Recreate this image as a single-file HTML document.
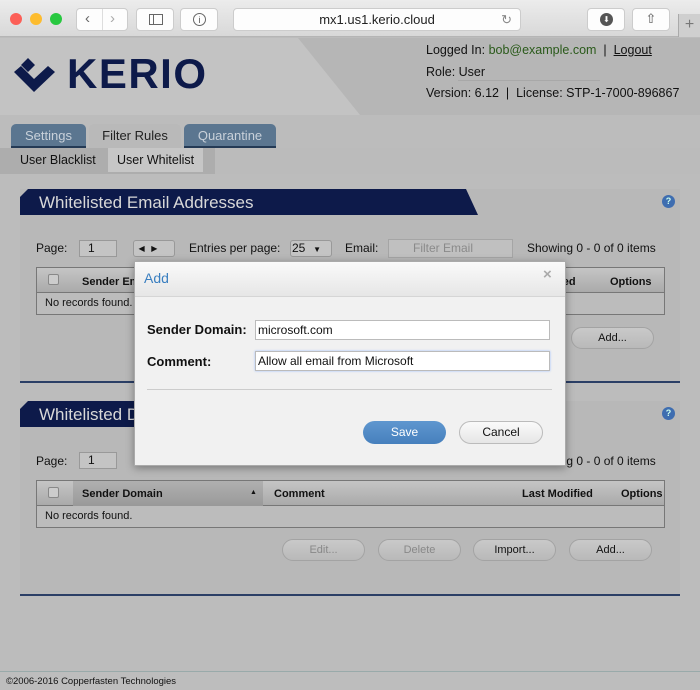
<!DOCTYPE html>
<html><head><style>
*{box-sizing:border-box;margin:0;padding:0}
body{width:700px;height:690px;overflow:hidden;font-family:"Liberation Sans",sans-serif;background:#bcbcbc;position:relative;font-size:12px;color:#111}
.a{position:absolute}
.btn{position:absolute;border:1px solid #a3a3a3;border-radius:11px;background:linear-gradient(#c9c9c9,#b9b9b9);text-align:center;font-size:11px;line-height:20px;height:22px}
.tb{position:absolute;top:8px;height:23px;border:1px solid #ccc;border-radius:4px;background:#fdfdfd}
</style></head><body>
<div class="a" style="left:0;top:0;width:700px;height:37px;background:linear-gradient(#ececec,#d8d8d8);border-bottom:1px solid #b5b5b5"></div>
<div class="a" style="left:10px;top:13px;width:12px;height:12px;border-radius:6px;background:#fc5f57"></div>
<div class="a" style="left:30px;top:13px;width:12px;height:12px;border-radius:6px;background:#fdbc2e"></div>
<div class="a" style="left:50px;top:13px;width:12px;height:12px;border-radius:6px;background:#28c840"></div>
<div class="tb" style="left:76px;width:52px"></div>
<div class="a" style="left:102px;top:9px;width:1px;height:21px;background:#ddd"></div>
<div class="a" style="left:85px;top:10px;font-size:15px;color:#666">‹</div><div class="a" style="left:110px;top:10px;font-size:15px;color:#aaa">›</div>
<div class="tb" style="left:136px;width:38px"><div class="a" style="left:12px;top:5px;width:14px;height:11px;border:1px solid #666"></div><div class="a" style="left:16px;top:5px;width:1px;height:11px;background:#666"></div></div>
<div class="tb" style="left:180px;width:38px"><div class="a" style="left:12px;top:4px;width:13px;height:13px;border:1px solid #666;border-radius:7px;font-size:9px;text-align:center;line-height:12px;color:#555">i</div></div>
<div class="tb" style="left:233px;width:288px;text-align:center;font-size:13px;line-height:21px;color:#222">mx1.us1.kerio.cloud<span class="a" style="right:8px;top:0;color:#888">↻</span></div>
<div class="tb" style="left:587px;width:38px"><div class="a" style="left:12px;top:4px;width:13px;height:13px;border-radius:7px;background:#555;color:#fff;font-size:8px;text-align:center;line-height:13px">⬇</div></div>
<div class="tb" style="left:632px;width:38px;text-align:center;color:#555;font-size:13px;line-height:20px">⇧</div>
<div class="a" style="left:678px;top:14px;width:22px;height:23px;background:#cfcfcf;border-left:1px solid #aaa;text-align:center;color:#777;font-size:16px;line-height:22px">+</div>
<div class="a" style="left:0;top:38px;width:700px;height:77px;background:#b6b6b6"></div>
<div class="a" style="left:0;top:38px;width:360px;height:77px;background:#c3c3c3;clip-path:polygon(0 0,298px 0,360px 77px,0 77px)"></div>
<svg class="a" style="left:12px;top:58px" width="46" height="34" viewBox="0 0 46 34"><path d="M16 0 L23 7 L16 14 L9 7Z M2 14 L9 8 L22 21 L36 8 L43 14 L22 34Z" fill="#0d1a4a"/></svg>
<div class="a" style="left:67px;top:50px;font-size:42px;font-weight:bold;color:#0d1a4a;letter-spacing:1.5px">KERIO</div>
<div class="a" style="left:426px;top:43px;font-size:12.5px">Logged In: <span style="color:#2a5a1a">bob@example.com</span> &nbsp;| &nbsp;<u>Logout</u></div>
<div class="a" style="left:426px;top:65px;font-size:12.5px">Role: User</div>
<div class="a" style="left:458px;top:80px;width:142px;height:1px;background:#a8a8a8"></div>
<div class="a" style="left:426px;top:86px;font-size:12.5px">Version: 6.12 &nbsp;| &nbsp;License: STP-1-7000-896867</div>
<div class="a" style="left:11px;top:124px;width:75px;height:24px;background:#5b7690;border-radius:5px 5px 0 0;border-bottom:2px solid #243a55;color:#c9d1da;font-size:13px;text-align:center;line-height:24px">Settings</div>
<div class="a" style="left:89px;top:124px;width:92px;height:24px;background:#b9b9b9;border-radius:5px 5px 0 0;font-size:13px;text-align:center;line-height:24px;color:#222">Filter Rules</div>
<div class="a" style="left:184px;top:124px;width:92px;height:24px;background:#5b7690;border-radius:5px 5px 0 0;border-bottom:2px solid #243a55;color:#c9d1da;font-size:13px;text-align:center;line-height:24px">Quarantine</div>
<div class="a" style="left:0;top:148px;width:700px;height:26px;background:#bbb"></div>
<div class="a" style="left:0;top:148px;width:215px;height:26px;background:#adadad"></div>
<div class="a" style="left:20px;top:153px;font-size:12.5px">User Blacklist</div>
<div class="a" style="left:108px;top:148px;width:95px;height:24px;background:#c6c6c6"></div>
<div class="a" style="left:117px;top:153px;font-size:12.5px">User Whitelist</div>
<div class="a" style="left:20px;top:189px;width:660px;height:194px;background:#b8b8b8;border-bottom:2px solid #2b3f66"></div>
<div class="a" style="left:20px;top:189px;width:458px;height:26px;background:#0d1a4a;clip-path:polygon(8px 0,446px 0,458px 26px,0 26px,0 8px);color:#d8d8d8;font-size:17px;line-height:28px;padding-left:19px">Whitelisted Email Addresses</div>
<div class="a" style="left:662px;top:195px;width:13px;height:13px;border-radius:7px;background:#3e6db0;color:#cfe;font-size:9px;text-align:center;line-height:13px;font-weight:bold">?</div>
<div class="a" style="left:36px;top:241px">Page:</div>
<div class="a" style="left:79px;top:240px;width:38px;height:17px;border:1px solid #999;background:#c4c4c4;padding-left:8px;line-height:15px">1</div>
<div class="a" style="left:133px;top:240px;width:42px;height:17px;border:1px solid #999;border-radius:3px;background:#c4c4c4;font-size:8px;line-height:15px">&nbsp;&nbsp;◀&nbsp;&nbsp;&nbsp;▶</div>
<div class="a" style="left:189px;top:241px">Entries per page:</div>
<div class="a" style="left:290px;top:240px;width:42px;height:17px;border:1px solid #999;border-radius:3px;background:#c4c4c4;padding-left:1px;line-height:15px">25 <span style="font-size:8px">&nbsp;&nbsp;▼</span></div>
<div class="a" style="left:345px;top:241px">Email:</div>
<div class="a" style="left:388px;top:239px;width:125px;height:19px;border:1px solid #a5a5a5;background:#c0c0c0;color:#8a8a8a;padding-left:24px;line-height:17px">Filter Email</div>
<div class="a" style="left:527px;top:241px">Showing 0 - 0 of 0 items</div>
<div class="a" style="left:36px;top:267px;width:629px;height:48px;border:1px solid #777;background:#bcbcbc"></div>
<div class="a" style="left:37px;top:268px;width:627px;height:25px;background:linear-gradient(#c5c5c5,#aaa);border-bottom:1px solid #777"></div>
<div class="a" style="left:48px;top:274px;width:11px;height:11px;border:1px solid #888;border-radius:2px;background:#ccc"></div>
<div class="a" style="left:82px;top:276px;font-size:11px;font-weight:bold">Sender Em</div>
<div class="a" style="left:553px;top:276px;font-size:11px;font-weight:bold">ified</div>
<div class="a" style="left:610px;top:276px;font-size:11px;font-weight:bold">Options</div>
<div class="a" style="left:45px;top:297px;font-size:11px">No records found.</div>
<div class="btn" style="left:571px;top:327px;width:83px">Add...</div>
<div class="a" style="left:20px;top:401px;width:660px;height:195px;background:#b8b8b8;border-bottom:2px solid #2b3f66"></div>
<div class="a" style="left:20px;top:401px;width:458px;height:26px;background:#0d1a4a;clip-path:polygon(8px 0,446px 0,458px 26px,0 26px,0 8px);color:#d8d8d8;font-size:17px;line-height:28px;padding-left:19px">Whitelisted Domains</div>
<div class="a" style="left:662px;top:407px;width:13px;height:13px;border-radius:7px;background:#3e6db0;color:#cfe;font-size:9px;text-align:center;line-height:13px;font-weight:bold">?</div>
<div class="a" style="left:36px;top:454px">Page:</div>
<div class="a" style="left:79px;top:452px;width:38px;height:17px;border:1px solid #999;background:#c4c4c4;padding-left:8px;line-height:15px">1</div>
<div class="a" style="left:527px;top:454px">Showing 0 - 0 of 0 items</div>
<div class="a" style="left:36px;top:480px;width:629px;height:48px;border:1px solid #777;background:#bcbcbc"></div>
<div class="a" style="left:37px;top:481px;width:627px;height:25px;background:linear-gradient(#c5c5c5,#aaa);border-bottom:1px solid #777"></div>
<div class="a" style="left:73px;top:481px;width:190px;height:25px;background:linear-gradient(#b0b0b0,#999)"></div>
<div class="a" style="left:48px;top:487px;width:11px;height:11px;border:1px solid #888;border-radius:2px;background:#ccc"></div>
<div class="a" style="left:82px;top:488px;font-size:11px;font-weight:bold">Sender Domain</div>
<div class="a" style="left:250px;top:489px;font-size:7px">▲</div>
<div class="a" style="left:274px;top:488px;font-size:11px;font-weight:bold">Comment</div>
<div class="a" style="left:522px;top:488px;font-size:11px;font-weight:bold">Last Modified</div>
<div class="a" style="left:621px;top:488px;font-size:11px;font-weight:bold">Options</div>
<div class="a" style="left:45px;top:510px;font-size:11px">No records found.</div>
<div class="btn" style="left:282px;top:539px;width:83px;color:#888">Edit...</div>
<div class="btn" style="left:378px;top:539px;width:83px;color:#888">Delete</div>
<div class="btn" style="left:473px;top:539px;width:83px">Import...</div>
<div class="btn" style="left:569px;top:539px;width:83px">Add...</div>
<div class="a" style="left:0;top:671px;width:700px;height:19px;background:#bdbdbd;border-top:1px solid #9aa;font-size:9.5px;padding:4px 0 0 6px">©2006-2016 Copperfasten Technologies</div>
<div class="a" style="left:134px;top:261px;width:432px;height:205px;background:#f1f1f1;border:1px solid #aaa;box-shadow:0 2px 8px rgba(0,0,0,.35)"></div>
<div class="a" style="left:135px;top:262px;width:430px;height:35px;background:linear-gradient(#fafafa,#e6e6e6);border-bottom:1px solid #d5d5d5"></div>
<div class="a" style="left:144px;top:270px;font-size:14px;color:#3a7fc0">Add</div>
<div class="a" style="left:543px;top:266px;font-size:15px;color:#aaa;font-weight:bold">×</div>
<div class="a" style="left:147px;top:322px;font-weight:bold;font-size:13px">Sender Domain:</div>
<div class="a" style="left:255px;top:320px;width:295px;height:20px;border:1px solid #bbb;background:#fff;padding-left:2px;font-size:12px;line-height:18px">microsoft.com</div>
<div class="a" style="left:147px;top:354px;font-weight:bold;font-size:13px">Comment:</div>
<div class="a" style="left:255px;top:351px;width:295px;height:20px;border:1px solid #bbb;background:#fff;padding-left:2px;font-size:12px;line-height:18px;box-shadow:0 0 2px #9bf">Allow all email from Microsoft</div>
<div class="a" style="left:147px;top:389px;width:405px;height:1px;background:#ccc"></div>
<div class="a" style="left:363px;top:421px;width:83px;height:23px;border-radius:12px;background:linear-gradient(#5f97cf,#4680bd);color:#fff;text-align:center;line-height:22px;font-size:12px">Save</div>
<div class="a" style="left:459px;top:421px;width:84px;height:23px;border-radius:12px;border:1px solid #bbb;background:linear-gradient(#fafafa,#e6e6e6);text-align:center;line-height:21px;font-size:12px">Cancel</div>
</body></html>
